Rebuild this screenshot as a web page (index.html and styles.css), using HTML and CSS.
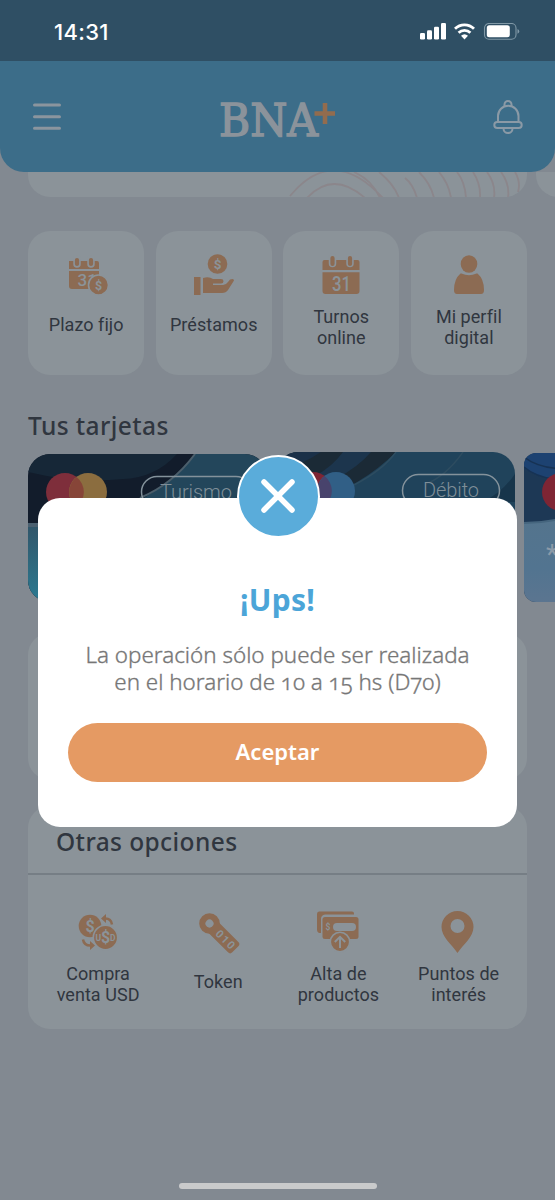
FILE: index.html
```
<!DOCTYPE html>
<html lang="es">
<head>
<meta charset="utf-8">
<title>BNA+</title>
<link rel="stylesheet" href="styles.css">
</head>
<body>
<div class="phone">
  <div class="status">
    <span class="time">14:31</span>
    <svg class="status-icons" width="100" height="18" viewBox="0 0 100 18">
      <g fill="#fff">
        <rect x="0" y="10" width="5" height="6.5" rx="1.3"/><rect x="7" y="7.2" width="5" height="9.3" rx="1.3"/>
        <rect x="14" y="3.8" width="5" height="12.7" rx="1.3"/><rect x="21" y="0" width="5" height="16.5" rx="1.3"/>
        <rect x="66.800" y="2.200" width="23" height="12.100" rx="2.500"/>
      </g>
      <g fill="none" stroke="#fff" stroke-width="2.800">
        <path d="M35 5.800a13.500 13.500 0 0 1 19 0"/><path d="M38.600 9.700a8.400 8.400 0 0 1 11.800 0"/>
      </g>
      <path d="M41 12.800q3.500-3 7 0l-3.500 3.700z" fill="#fff"/>
      <rect x="64.500" y=".5" width="31.500" height="15.800" rx="4.500" fill="none" stroke="#8199a7" stroke-width="1.100"/>
      <path d="M97.500 6q1.800 1 1.800 2.400t-1.800 2.400z" fill="#8199a7"/>
    </svg>
  </div>
  <header class="header">
    <svg width="28" height="28" viewBox="0 0 28 28" stroke="#8b959e" stroke-width="3" stroke-linecap="round"><path d="M1.500 2h25M1.500 13.700h25M1.500 25.300h25"/></svg>
    <svg class="logo" width="118" height="56" viewBox="0 0 118 56">
      <text x="1" y="47" textLength="99" lengthAdjust="spacingAndGlyphs">BNA</text>
      <path d="M107 14v21M96.500 24.500H117" stroke="#926c4e" stroke-width="4.600"/>
    </svg>
    <svg width="30" height="34" viewBox="0 0 30 34" fill="none" stroke="#8b9aa6" stroke-width="2">
      <path d="M11.500 6V4.500a3.500 3.500 0 0 1 7 0V6"/><path d="M5 22V16a10.200 10.200 0 0 1 20.500 0v6"/>
      <rect x="1.300" y="22" width="27.400" height="6" rx="3"/><path d="M10.500 28.500a4.500 4.500 0 0 0 9 0"/>
    </svg>
  </header>

  <div class="promos">
    <div class="promo">
      <svg width="240" height="26" viewBox="0 0 240 26" fill="none" stroke="#8b868b" stroke-width="1.800">
        <path d="M20 26Q46-2 78 26M3 24Q46-28 96 26M67 0Q85 8 93 26M92 0Q107 12 112 26M118 6Q126 12 130 26M132 0Q144 12 147 26M152 0Q162 12 164 26M170 0Q178 10 179 26M186 0Q194 12 193 26M200 0Q209 12 207 26M214 0Q223 12 221 26M228 0Q234 10 231 20"/>
      </svg>
    </div>
    <div class="promo"></div>
  </div>

  <section class="tiles">
    <div class="tile">
      <svg class="icon" viewBox="0 0 44 44">
        <path class="o" d="M5 8h28q2 0 2 2v6H5zM5 18h30v18H8q-3 0-3-3z"/>
        <path class="cut" d="M13 6v5M27 6v5"/><path class="peg" d="M13 7v4M27 7v4"/>
        <text class="num thin" x="13.500" y="33" font-size="17">31</text>
        <circle class="ring" cx="34.500" cy="32" r="10"/><text class="num" x="34.500" y="36.500" font-size="12.500" text-anchor="middle">$</text>
      </svg><span>Plazo fijo</span>
    </div>
    <div class="tile">
      <svg class="icon" viewBox="0 0 44 44">
        <circle class="o" cx="25.500" cy="11" r="9.800"/><text class="num" x="25.500" y="15.800" font-size="13.500" text-anchor="middle">$</text>
        <path class="o" d="M2 24h6.500v18H2zM11 25q6-2 10 1h8q2.500 0 2.500 2.200T29 30.500h-8V32h10q3 0 5-3l2-2.500q4-1.500 4 1L36 37q-2 3-6 3H11z"/>
      </svg><span>Préstamos</span>
    </div>
    <div class="tile">
      <svg class="icon" viewBox="0 0 44 44">
        <path class="o" d="M3.500 9q0-2 2-2h33q2 0 2 2v8h-37zM3.500 19.200h37V38q0 3-3 3h-31q-3 0-3-3z"/>
        <path class="cut" d="M13.500 4v6.500M31 4v6.500"/><path class="peg" d="M13.500 5v6M31 5v6"/>
        <text class="num thin" x="22.500" y="37.500" font-size="20" text-anchor="middle" textLength="19" lengthAdjust="spacingAndGlyphs">31</text>
      </svg><span>Turnos<br>online</span>
    </div>
    <div class="tile">
      <svg class="icon" viewBox="0 0 44 44">
        <ellipse class="o" cx="22" cy="11" rx="8.300" ry="8.800"/><path class="o" d="M13.500 20.500h1q7.500 3.500 15 0h1Q37 26 37 37q0 4-3 4H10q-3 0-3-4 0-11 6.500-16.500z"/>
      </svg><span>Mi perfil<br>digital</span>
    </div>
  </section>

  <h2 class="heading">Tus tarjetas</h2>
  <section class="cards">
    <div class="bank-card">
      <svg width="239" height="148" viewBox="0 0 239 148">
        <defs><linearGradient id="teal" x2="0" y2="1"><stop offset="0" stop-color="#31566a"/><stop offset="1" stop-color="#2c7a91"/></linearGradient></defs>
        <rect width="239" height="148" fill="#121c2b"/>
        <path d="M0 0h149Q127 24 95 25 50 30 0 18z" fill="#162737"/>
        <path d="M167 0h72v148H0V71q110 0 167-71z" fill="#23465b"/>
        <path d="M0 42h119Q70 66 0 70z" fill="#121c2b"/>
        <path d="M167 0Q145 30 112 44" fill="none" stroke="#4b5e6b" stroke-width="2"/>
        <path d="M0 72h239v76H0z" fill="url(#teal)"/><path d="M0 71h239" stroke="#4b6070" stroke-width="4"/>
        <circle cx="37" cy="38" r="19" fill="#7e2e3b"/><circle cx="60" cy="38" r="19" fill="#8b6d3f"/><path d="M48.500 23a19 19 0 0 1 0 30 19 19 0 0 1 0-30" fill="#874538"/>
        <rect x="113.500" y="22.500" width="110" height="31" rx="15.500" fill="none" stroke="#84929b" stroke-width="1.500"/>
        <text class="card-label" x="132" y="44.500" textLength="72">Turismo</text>
      </svg>
    </div>
    <div class="bank-card active">
      <svg width="239" height="150" viewBox="0 0 239 150">
        <rect width="239" height="150" fill="#20435b"/>
        <path d="M0 0h120Q85 35 35 50H0z" fill="#1b2a36"/>
        <path d="M0 35Q45 30 67 0h28Q70 30 0 50z" fill="#1c354d"/><path d="M0 0h45Q25 14 0 18z" fill="#1a3048"/>
        <path d="M120 0Q107 18 78 33M187 0Q170 24 150 32" fill="none" stroke="#2d4c60" stroke-width="1.500"/>
        <path d="M206 50Q225 42 239 22v28z" fill="#17354b"/>
        <circle cx="37" cy="39" r="19" fill="#7e2534"/><circle cx="60" cy="39" r="19" fill="#315f86"/><path d="M48.500 24a19 19 0 0 1 0 30 19 19 0 0 1 0-30" fill="#48436c"/>
        <rect x="126.500" y="22.500" width="97" height="32" rx="16" fill="none" stroke="#84929b" stroke-width="1.500"/>
        <text class="card-label" x="147" y="45" textLength="56">Débito</text>
      </svg>
    </div>
    <div class="bank-card">
      <svg width="239" height="149" viewBox="0 0 239 149">
        <defs><linearGradient id="steel" x2="0" y2="1"><stop offset="0" stop-color="#54748d"/><stop offset=".6" stop-color="#527490"/><stop offset="1" stop-color="#5b7590"/></linearGradient></defs>
        <rect width="239" height="149" fill="#1d3855"/><path d="M0 0h40v27Q16 27 0 15z" fill="#1d4271"/>
        <path d="M0 4Q14 15 40 16M0 14Q14 26 40 27" fill="none" stroke="#173253" stroke-width="1.500"/>
        <path d="M0 70Q20 70 40 65v84H0z" fill="url(#steel)"/><path d="M0 70Q20 70 40 65" fill="none" stroke="#45657e" stroke-width="2"/>
        <circle cx="37" cy="39" r="19" fill="#7e2534"/><text x="22" y="111" class="stars">*</text>
      </svg>
    </div>
  </section>

  <section class="panel blank"></section>
  <section class="panel options">
    <h2 class="heading">Otras opciones</h2>
    <div class="option-grid">
      <div class="option">
        <svg class="icon" viewBox="0 0 44 44">
          <circle class="o" cx="14" cy="16" r="11.300"/><text class="num" x="14" y="21.500" font-size="16" text-anchor="middle">$</text>
          <circle class="ring" cx="29.500" cy="27.500" r="12.200"/>
          <text class="num" x="29.500" y="33" font-size="16" text-anchor="middle">$</text><text class="num" x="19.500" y="31" font-size="8.500">U</text><text class="num" x="34" y="31" font-size="8.500">D</text>
          <path class="line" d="M28.500 8.500q6.500-.5 7.500 6M15.500 35.500q-7.500 .5-8.500-6"/><path class="o" d="M30 4v9l-5-4.500zM14 40v-9l5 4.500z"/>
        </svg><span>Compra<br>venta USD</span>
      </div>
      <div class="option">
        <svg class="icon" viewBox="0 0 44 44">
          <g transform="rotate(45 13.500 13.500)"><circle class="o" cx="13.500" cy="13.500" r="10.300"/><rect class="o" x="14" y="6.200" width="36" height="14.600" rx="3"/><circle cx="13.500" cy="13.500" r="4" fill="#8b9399"/><text class="num" x="25" y="17.500" font-size="11" textLength="22">010</text></g>
        </svg><span>Token</span>
      </div>
      <div class="option">
        <svg class="icon" viewBox="0 0 44 44">
          <path class="o" d="M3 1.500h33q2 0 2 2v1H9Q5 5 5 9v14H3q-2-1-2-3V4q0-2.500 2-2.500z"/>
          <rect class="o" x="6.500" y="7" width="36" height="22" rx="2.500"/><rect x="17" y="13" width="23" height="8" rx="4" fill="#8b9399"/><text class="num" x="9.500" y="20" font-size="8.500">$</text>
          <circle class="ring" cx="24" cy="32" r="9.700"/><path d="M24 38V27M18.800 32l5.200-5.200 5.200 5.200" fill="none" stroke="#8b9399" stroke-width="2"/>
        </svg><span>Alta de<br>productos</span>
      </div>
      <div class="option">
        <svg class="icon" viewBox="0 0 44 44">
          <path class="o" fill-rule="evenodd" d="M20.500 1a16 16 0 0 1 16 16c0 10-10 17-16 26C14.500 34 4.500 27 4.500 17a16 16 0 0 1 16-16zm0 8a7 7 0 1 0 0 14 7 7 0 0 0 0-14z"/>
        </svg><span>Puntos de<br>interés</span>
      </div>
    </div>
  </section>
  <div class="home-bar"></div>

  <div class="modal">
    <div class="badge"><svg width="36" height="36" viewBox="0 0 36 36" stroke="#fff" stroke-width="5.500" stroke-linecap="round"><path d="M4 4l28 28M32 4L4 32"/></svg></div>
    <h1>¡Ups!</h1>
    <p>La operación sólo puede ser realizada<br>en el horario de 10 a 15 hs (D70)</p>
    <button type="button">Aceptar</button>
  </div>
</div>
</body>
</html>
```
FILE: styles.css
```
* { box-sizing: border-box; }
body { margin: 0; background: #828991; }
.phone { position: relative; width: 555px; height: 1200px; overflow: hidden; display: flex; flex-direction: column; background: #828991; color: #30363f; font-family: Roboto, sans-serif; }
.status { height: 61px; flex: none; padding: 0 35px 0 54px; display: flex; justify-content: space-between; align-items: center; background: #2f4f64; }
.time { color: #fff; font: 500 22px/26px Inter, sans-serif; letter-spacing: .3px; padding-top: 2px; }
.status-icons { margin-top: 2px; }
.header { height: 111px; flex: none; padding: 0 32px 0 33px; display: flex; justify-content: space-between; align-items: center; background: #3c6d89; border-radius: 0 0 24px 24px; }
.logo text { font: 44px/1 "DejaVu Serif", serif; fill: #8b939b; stroke: #8b939b; stroke-width: 1.500px; }
.logo { margin-left: -1px; }
.promos { display: flex; gap: 9px; padding-left: 28px; height: 25px; flex: none; }
.promo { width: 499px; flex: none; background: #8b9399; border-radius: 0 0 22px 22px; overflow: hidden; display: flex; justify-content: flex-end; }
.tiles { margin: 34px 28px 0; height: 144px; flex: none; display: grid; grid-template-columns: repeat(4, 1fr); gap: 11.300px; }
.tile { background: #8b9399; border-radius: 22px; padding-top: 22px; display: flex; flex-direction: column; align-items: center; }
.tile span, .option span { height: 36px; display: flex; align-items: center; text-align: center; font-size: 18px; line-height: 21px; letter-spacing: .05px; }
.tile span { margin-top: 9px; }
.tile:nth-child(n+3) span, .option span { height: 42px; }
.option:nth-child(2) span { height: 37px; }
.icon { width: 44px; height: 44px; overflow: visible; }
.o { fill: #8c6b53; }
.cut { stroke: #8b9399; stroke-width: 7.500px; stroke-linecap: round; }
.peg { stroke: #8c6b53; stroke-width: 4.200px; stroke-linecap: round; }
.ring { fill: #8c6b53; stroke: #8b9399; stroke-width: 1.600px; }
.line { fill: none; stroke: #8c6b53; stroke-width: 2.500px; }
.num { fill: #8b9399; font-family: Roboto, sans-serif; font-weight: 700; }
.thin { font-weight: 500; }
.heading { margin: 0; font: 500 24.500px/34px "Noto Sans", "Open Sans", sans-serif; letter-spacing: .4px; }
.phone > .heading { margin: 34px 0 0 28px; }
.cards { display: flex; align-items: center; gap: 9px; height: 150px; margin: 9px 0 0 28px; flex: none; }
.bank-card { width: 239px; flex: none; border-radius: 22px; overflow: hidden; display: flex; }
.bank-card:first-child { margin-top: 2px; }
.bank-card:last-child { border-radius: 12px; }
.card-label { fill: #7f8e98; font: 300 20px Roboto, sans-serif; }
.stars { fill: #8b9aa8; font: 28px Roboto, sans-serif; }
.panel { margin: 0 28px; background: #8b9399; border-radius: 22px; flex: none; }
.blank { height: 147px; margin-top: 31px; }
.options { height: 223px; margin-top: 26px; }
.options .heading { padding: 19px 0 0 28px; height: 69px; border-bottom: 2px solid #767e85; }
.option-grid { display: grid; grid-template-columns: repeat(4, 120.200px); padding: 35px 10px 0; }
.option { display: flex; flex-direction: column; align-items: center; gap: 9px; }
.home-bar { width: 198px; height: 6px; flex: none; margin: auto auto 11px; border-radius: 3px; background: #c9cacb; }
.modal { position: absolute; left: 38px; top: 498px; width: 479px; height: 329px; padding: 81px 30px 0; background: #fff; border-radius: 22px; display: flex; flex-direction: column; text-align: center; font-family: "Noto Sans", sans-serif; }
.badge { position: absolute; left: 198.500px; top: -43.500px; width: 83px; height: 83px; border-radius: 50%; border: 2.500px solid #fff; background: #5aacda; display: flex; align-items: center; justify-content: center; }
.modal h1 { margin: 0; color: #4ca5d8; font-size: 30px; font-weight: 700; line-height: 42px; letter-spacing: .3px; }
.modal p { margin: 20px 0 0; color: #737373; -webkit-text-stroke: .35px #808080; font-size: 22.400px; line-height: 27px; font-weight: 300; font-variant-numeric: oldstyle-nums; white-space: nowrap; }
.modal button { margin-top: 28px; height: 59px; border: 0; border-radius: 30px; background: #e59a63; color: #fff; font: 600 22px "Noto Sans", sans-serif; padding-bottom: 4px; }
```
